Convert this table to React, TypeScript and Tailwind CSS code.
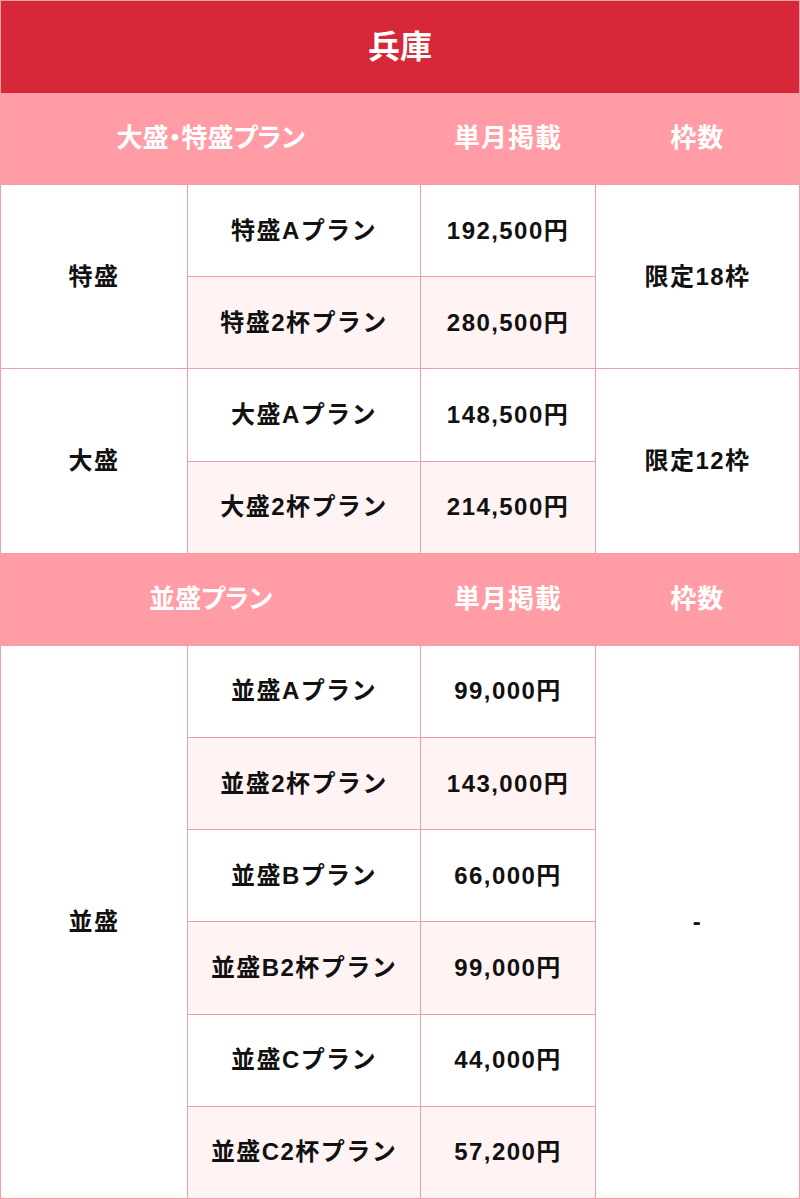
const font = { fontFamily: '"Liberation Sans", "Noto Sans CJK JP", sans-serif' }

type Plan = { name: string; price: string }

const bigPlans: { group: string; limit: string; plans: Plan[] }[] = [
  {
    group: '特盛',
    limit: '限定18枠',
    plans: [
      { name: '特盛Aプラン', price: '192,500円' },
      { name: '特盛2杯プラン', price: '280,500円' },
    ],
  },
  {
    group: '大盛',
    limit: '限定12枠',
    plans: [
      { name: '大盛Aプラン', price: '148,500円' },
      { name: '大盛2杯プラン', price: '214,500円' },
    ],
  },
]

const normalPlans: Plan[] = [
  { name: '並盛Aプラン', price: '99,000円' },
  { name: '並盛2杯プラン', price: '143,000円' },
  { name: '並盛Bプラン', price: '66,000円' },
  { name: '並盛B2杯プラン', price: '99,000円' },
  { name: '並盛Cプラン', price: '44,000円' },
  { name: '並盛C2杯プラン', price: '57,200円' },
]

const cell = 'border border-[#ee9fa9] text-center align-middle'

function HeadRow({ title }: { title: string }) {
  return (
    <tr className="h-[92px] bg-[#ff9ca5] text-[26px] tracking-[0.04em] text-white">
      <th colSpan={2} className="font-bold tracking-normal [font-feature-settings:'palt']">{title}</th>
      <th className="font-bold">単月掲載</th>
      <th className="font-bold">枠数</th>
    </tr>
  )
}

export default function App() {
  return (
    <div className="w-[800px] bg-white" style={font}>
      <table className="w-full table-fixed border-collapse border border-[#ee9fa9] text-[24px] tracking-[0.06em] text-[#111]">
        <colgroup>
          <col className="w-[187px]" />
          <col className="w-[233px]" />
          <col className="w-[175px]" />
          <col />
        </colgroup>
        <tbody>
          <tr className="h-[92px] bg-[#d7283a] text-white">
            <th colSpan={4} className="text-[32px] font-bold tracking-normal">兵庫</th>
          </tr>
          <HeadRow title="大盛・特盛プラン" />
          {bigPlans.map((g) =>
            g.plans.map((p, i) => (
              <tr key={p.name} className="h-[92.2px] font-bold">
                {i === 0 && (
                  <td rowSpan={2} className={`${cell} bg-white`}>{g.group}</td>
                )}
                <td className={`${cell} ${i % 2 ? 'bg-[#fff3f4]' : 'bg-white'}`}>{p.name}</td>
                <td className={`${cell} ${i % 2 ? 'bg-[#fff3f4]' : 'bg-white'}`}>{p.price}</td>
                {i === 0 && (
                  <td rowSpan={2} className={`${cell} bg-white`}>{g.limit}</td>
                )}
              </tr>
            ))
          )}
          <HeadRow title="並盛プラン" />
          {normalPlans.map((p, i) => (
            <tr key={p.name} className="h-[92.2px] font-bold">
              {i === 0 && (
                <td rowSpan={6} className={`${cell} bg-white`}>並盛</td>
              )}
              <td className={`${cell} ${i % 2 ? 'bg-[#fff3f4]' : 'bg-white'}`}>{p.name}</td>
              <td className={`${cell} ${i % 2 ? 'bg-[#fff3f4]' : 'bg-white'}`}>{p.price}</td>
              {i === 0 && (
                <td rowSpan={6} className={`${cell} bg-white`}>-</td>
              )}
            </tr>
          ))}
        </tbody>
      </table>
    </div>
  )
}
